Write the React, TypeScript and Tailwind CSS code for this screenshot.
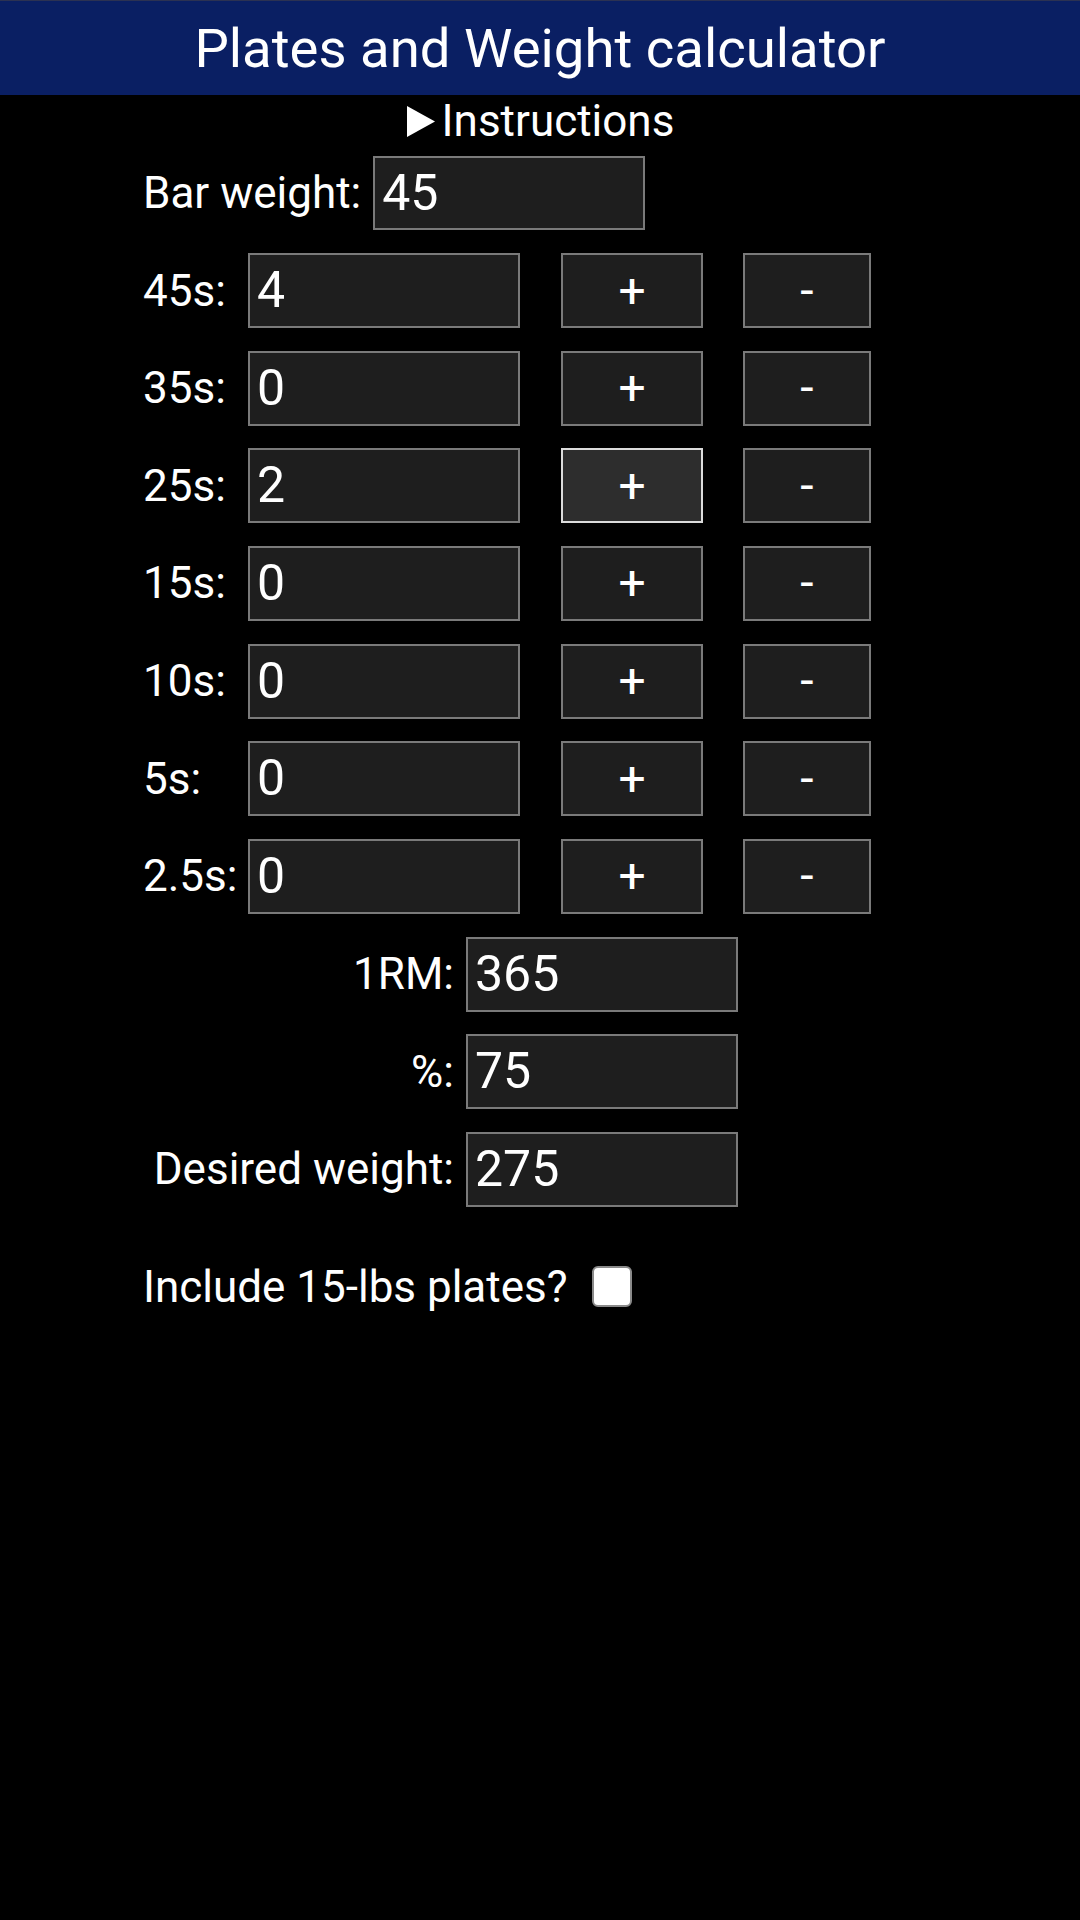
import { useState } from "react";

const plates = ["45s", "35s", "25s", "15s", "10s", "5s", "2.5s"];

export default function App() {
  const [counts, setCounts] = useState<number[]>([4, 0, 2, 0, 0, 0, 0]);
  const [include15, setInclude15] = useState(false);

  function bump(i: number, d: number) {
    setCounts((c) => c.map((v, j) => (j === i ? Math.max(0, v + d) : v)));
  }

  const inputCls =
    "h-[75px] w-[272px] border-2 border-[#7a7a7a] bg-[#1e1e1e] px-[7px] text-[50px] text-white outline-none";

  return (
    <div className="min-h-[1920px] w-full bg-black font-[Roboto,sans-serif] text-white">
      <header className="flex h-[95px] items-center justify-center border-t border-[#2c3252] bg-[#0a1f63]">
        <h1 className="text-[54.5px] leading-none">Plates and Weight calculator</h1>
      </header>

      <div className="flex h-[52px] items-center justify-center text-[44px]">
        <svg width="30" height="31" viewBox="0 0 30 31" className="mr-[6px]">
          <polygon points="1,0 29,15.5 1,31" fill="white" />
        </svg>
        <span className="leading-none">Instructions</span>
      </div>

      <div className="mt-[9px] flex items-center pl-[143px]">
        <span className="text-[44px] leading-none">Bar weight:</span>
        <input
          className="ml-[12px] h-[74px] w-[272px] border-2 border-[#7a7a7a] bg-[#1e1e1e] px-[7px] text-[50px] text-white outline-none"
          defaultValue="45"
        />
      </div>

      <div className="mt-[23px] flex flex-col gap-[22.67px] pl-[143px]">
        {plates.map((p, i) => (
          <div key={p} className="flex h-[75px] items-center">
            <span className="w-[105px] whitespace-nowrap text-[44px] leading-none">{p}:</span>
            <input className={inputCls} value={counts[i]} readOnly />
            <button
              onClick={() => bump(i, 1)}
              className={
                i === 2
                  ? "ml-[41px] h-[75px] w-[142px] border-2 border-[#dcdcdc] bg-[#2d2d2d] text-[48px] leading-none"
                  : "ml-[41px] h-[75px] w-[142px] border-2 border-[#7a7a7a] bg-[#1e1e1e] text-[48px] leading-none"
              }
            >
              +
            </button>
            <button
              onClick={() => bump(i, -1)}
              className="ml-[40px] h-[75px] w-[128px] border-2 border-[#7a7a7a] bg-[#1e1e1e] text-[48px] leading-none"
            >
              -
            </button>
          </div>
        ))}

        {[
          ["1RM:", "365"],
          ["%:", "75"],
          ["Desired weight:", "275"],
        ].map(([label, value]) => (
          <div key={label} className="flex h-[75px] items-center">
            <span className="w-[311px] whitespace-nowrap text-right text-[44px] leading-none">
              {label}
            </span>
            <input className={"ml-[12px] " + inputCls} defaultValue={value} />
          </div>
        ))}
      </div>

      <div className="mt-[58px] flex h-[44px] items-center pl-[143px]">
        <span className="text-[44px] leading-none">Include 15-lbs plates?</span>
        <button
          onClick={() => setInclude15(!include15)}
          className="ml-[24px] flex h-[41px] w-[40px] items-center justify-center rounded-[6px] border-2 border-[#8a8a8a] bg-white"
        >
          {include15 && (
            <svg width="26" height="26" viewBox="0 0 24 24">
              <path d="M5 12l5 5 9-10" stroke="#1a73e8" strokeWidth="3" fill="none" />
            </svg>
          )}
        </button>
      </div>
    </div>
  );
}
